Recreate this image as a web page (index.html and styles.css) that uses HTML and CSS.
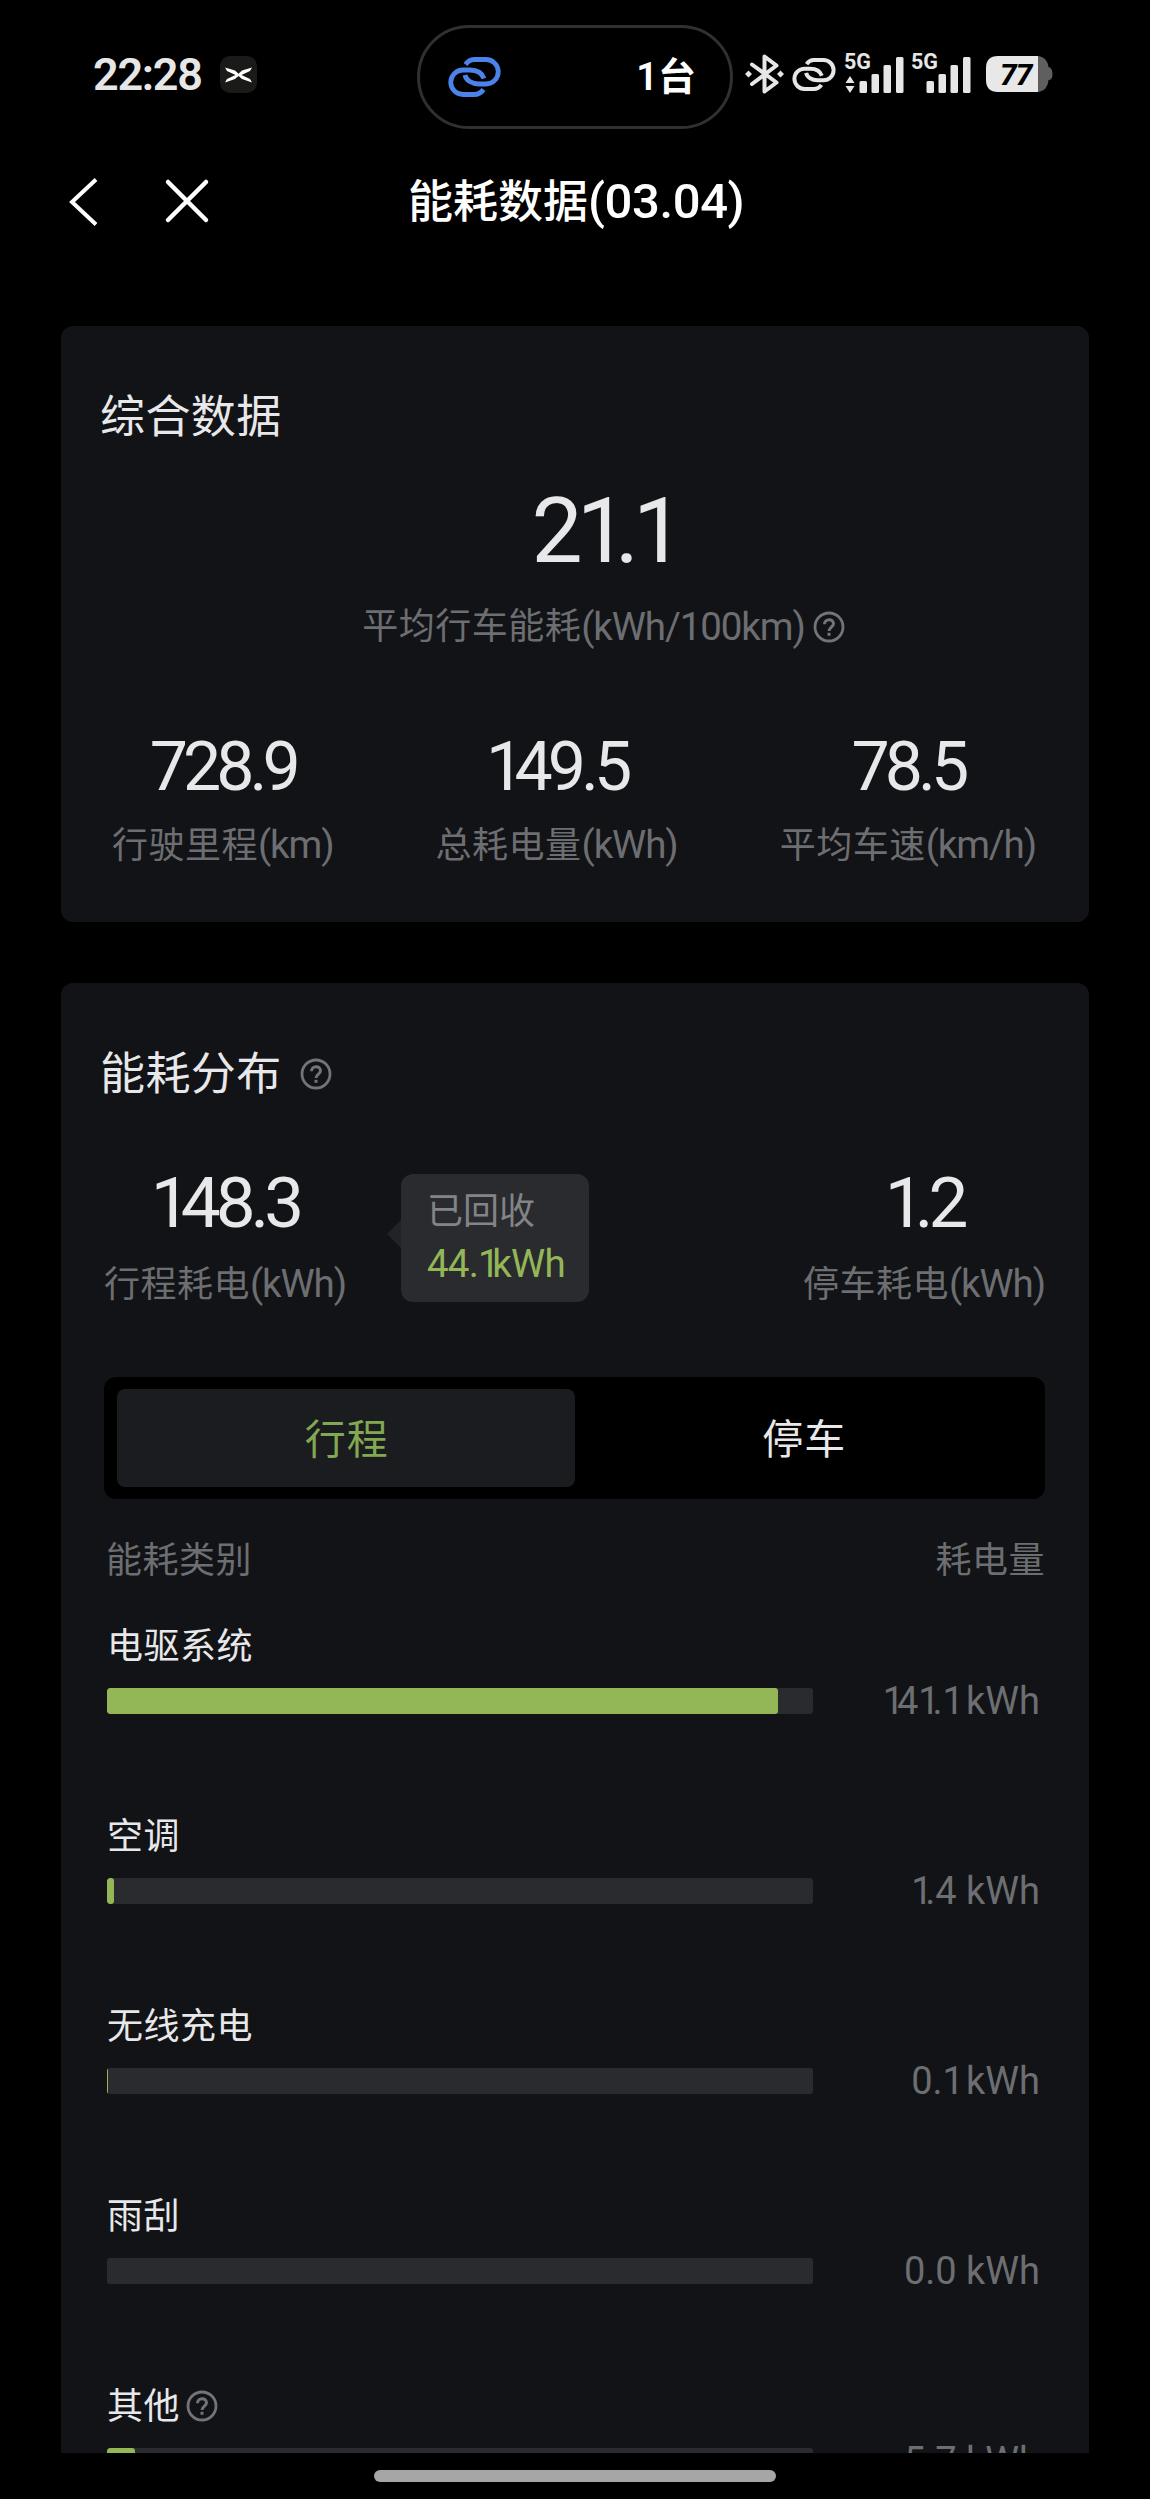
FILE: index.html
```html
<!DOCTYPE html>
<html lang="zh-CN">
<head>
<meta charset="utf-8">
<title>能耗数据</title>
<link rel="stylesheet" href="styles.css">
</head>
<body>
<svg width="0" height="0" class="defs">
  <symbol id="link" viewBox="0 0 53 40">
    <g fill="none" stroke="currentColor" stroke-width="4.800">
      <path d="M17.500 7.500C20 4 22.500 2.500 26 2.500H38A12.200 12.200 0 0 1 38 27H31C24 27 18 23.500 17 18"/>
      <path d="M36 21.500C34 16 29 13 22 13H15A12.200 12.200 0 0 0 15 37.500H26C30 37.500 33 36 35.500 32.500"/>
    </g>
  </symbol>
  <symbol id="help" viewBox="0 0 32 32">
    <g fill="none" stroke="currentColor" stroke-width="2.800">
      <circle cx="16" cy="16" r="14"/>
      <path d="M11.500 13.200C11.500 7.200 20.500 7.200 20.500 12.800C20.500 16 16 16.200 16 20" stroke-width="3"/>
      <path d="M16 21.800V24.800" stroke-width="3"/>
    </g>
  </symbol>
</svg>
<div class="screen">
  <header class="status">
    <span class="clock">22:28</span>
    <span class="app-badge">
      <svg width="27" height="16" viewBox="0 0 27 16"><path d="M0 .5L10 3.500L13.500 6.800L17 3.500L27 .5L25 4L16.500 8L25 12L27 15.500L17 12L13.500 9L10 12L0 15.500L2 12L10.500 8L2 4Z" fill="#fff"/></svg>
    </span>
    <div class="island">
      <svg class="island-link" width="53" height="40"><use href="#link"/></svg>
      <span class="island-text">1台</span>
    </div>
    <div class="indicators">
      <svg width="39" height="42" viewBox="0 0 39 42"><g fill="none" stroke="#e6e6e6" stroke-width="4" stroke-linejoin="round" stroke-linecap="round"><path d="M7 11.500L31.500 29.500L19.500 38.500V3.500L31.500 12.500L7 31"/></g><path d="M3.500 17.500L7 21L3.500 24.500L0 21ZM35.500 17.500L39 21L35.500 24.500L32 21Z" fill="#e6e6e6"/></svg>
      <svg class="status-link" width="44" height="33"><use href="#link"/></svg>
      <svg class="signal" width="61" height="44" viewBox="0 0 61 44"><text x="0" y="17" class="net">5G</text><g fill="#e6e6e6"><path d="M6 24L10.500 31H1.500ZM6 41L10.500 34H1.500Z"/><rect x="15.500" y="29" width="7.500" height="12" rx="1.500"/><rect x="27.500" y="22" width="7.500" height="19" rx="1.500"/><rect x="39.500" y="13" width="7.500" height="28" rx="1.500"/><rect x="52" y="5" width="7.500" height="36" rx="1.500"/></g></svg>
      <svg class="signal second" width="61" height="44" viewBox="0 0 61 44"><text x="0" y="17" class="net">5G</text><g fill="#e6e6e6"><rect x="15.500" y="29" width="7.500" height="12" rx="1.500"/><rect x="27.500" y="22" width="7.500" height="19" rx="1.500"/><rect x="39.500" y="13" width="7.500" height="28" rx="1.500"/><rect x="52" y="5" width="7.500" height="36" rx="1.500"/></g></svg>
      <svg width="67" height="36" viewBox="0 0 67 36"><path d="M51 0C58 0 62 5 62.500 11Q66.500 12 66.500 18T62.500 24C62 31 58 36 51 36Z" fill="#5f5f5f"/><path d="M12 0H52V36H12Q0 36 0 24V12Q0 0 12 0Z" fill="#e8e8e8"/><text x="14" y="28.500" class="level">77</text></svg>
    </div>
  </header>

  <nav class="nav">
    <svg width="29" height="48" viewBox="0 0 29 48"><path d="M27 1.500L3 24L27 46.500" fill="none" stroke="#fff" stroke-width="4"/></svg>
    <svg class="close" width="44" height="44" viewBox="0 0 44 44"><path d="M3 3L41 41M41 3L3 41" fill="none" stroke="#fff" stroke-width="4.500" stroke-linecap="round"/></svg>
    <h1>能耗数据<span class="en">(03.04)</span></h1>
  </nav>

  <main>
    <section class="card summary">
      <h2>综合数据</h2>
      <div class="hero">
        <div class="hero-value">2<span class="one">1</span>.<span class="one">1</span></div>
        <div class="label">平均行车能耗<span class="en">(kWh/100km)</span><svg class="help" width="32" height="32"><use href="#help"/></svg></div>
      </div>
      <div class="stats">
        <div class="stat"><div class="num">728.9</div><div class="label">行驶里程<span class="en">(km)</span></div></div>
        <div class="stat"><div class="num"><span class="one">1</span>49.5</div><div class="label">总耗电量<span class="en">(kWh)</span></div></div>
        <div class="stat"><div class="num">78.5</div><div class="label">平均车速<span class="en">(km/h)</span></div></div>
      </div>
    </section>

    <section class="card dist">
      <h2>能耗分布<svg class="help" width="32" height="32"><use href="#help"/></svg></h2>
      <div class="split">
        <div class="stat"><div class="num"><span class="one">1</span>48.3</div><div class="label">行程耗电<span class="en">(kWh)</span></div></div>
        <div class="recovered">
          <div class="rec-label">已回收</div>
          <div class="rec-value">44.<span class="one">1</span>kWh</div>
        </div>
        <div class="stat parked"><div class="num"><span class="one">1</span>.2</div><div class="label">停车耗电<span class="en">(kWh)</span></div></div>
      </div>
      <div class="tabs"><div class="tab active">行程</div><div class="tab">停车</div></div>
      <div class="head label"><span>能耗类别</span><span>耗电量</span></div>
      <div class="rows">
        <div class="row"><div class="name">电驱系统</div><div class="meter"><div class="track"><div class="fill" style="width:95.100%"></div></div><div class="amount"><span class="one">1</span>4<span class="one">1</span>.<span class="one">1</span> kWh</div></div></div>
        <div class="row"><div class="name">空调</div><div class="meter"><div class="track"><div class="fill" style="width:1%"></div></div><div class="amount"><span class="one">1</span>.4 kWh</div></div></div>
        <div class="row"><div class="name">无线充电</div><div class="meter"><div class="track"><div class="fill" style="width:.15%"></div></div><div class="amount">0.<span class="one">1</span> kWh</div></div></div>
        <div class="row"><div class="name">雨刮</div><div class="meter"><div class="track"><div class="fill" style="width:0"></div></div><div class="amount">0.0 kWh</div></div></div>
        <div class="row"><div class="name">其他<svg class="help" width="32" height="32"><use href="#help"/></svg></div><div class="meter"><div class="track"><div class="fill" style="width:3.900%"></div></div><div class="amount">5.7 kWh</div></div></div>
      </div>
    </section>
  </main>
  <footer><div class="home"></div></footer>
</div>
</body>
</html>
```
FILE: styles.css
```css
* { box-sizing: border-box; }
body {
  margin: 0;
  background: #000;
  color: #e8e8ea;
  font-family: Roboto, "Noto Sans CJK SC", sans-serif;
}
svg { display: block; flex: none; overflow: visible; }
.defs { position: absolute; }
h1, h2 { margin: 0; font-weight: 400; }
.screen {
  width: 1150px;
  height: 2499px;
  display: flex;
  flex-direction: column;
  overflow: hidden;
}

/* status bar */
.status {
  height: 150px;
  flex: none;
  display: flex;
  align-items: flex-start;
  padding-left: 93px;
}
.clock {
  width: 127px;
  margin-top: 48px;
  font-size: 45px;
  line-height: 54px;
  font-weight: 600;
  letter-spacing: -1.300px;
  color: #e6e6e6;
}
.app-badge {
  width: 37px;
  height: 37px;
  margin-top: 56px;
  border-radius: 10px;
  background: #1a1a19;
  display: flex;
  align-items: center;
  justify-content: center;
}
.island {
  width: 316px;
  height: 104px;
  margin: 25px 0 0 160px;
  padding: 0 34px 0 28px;
  border: 3px solid #303030;
  border-radius: 52px;
  display: flex;
  align-items: center;
  justify-content: space-between;
}
.island-link { color: #4b83ea; }
.island-text {
  font-size: 38px;
  line-height: 50px;
  font-weight: 600;
  color: #fff;
}
.indicators {
  display: flex;
  align-items: center;
  margin: 52px 0 0 12px;
  height: 44px;
}
.status-link { margin-left: 8px; color: #e6e6e6; }
.signal { margin-left: 8px; }
.signal.second { margin-left: 6px; }
.indicators svg:last-child { margin-left: 14px; }
.net { font: 700 21.500px Roboto, sans-serif; fill: #e6e6e6; }
.level { font: italic 800 30px Roboto, sans-serif; fill: #000; letter-spacing: -1px; }

/* title bar */
.nav {
  height: 176px;
  flex: none;
  display: grid;
  grid-template-columns: 29px 44px 1fr;
  column-gap: 67px;
  padding: 28px 0 0 69px;
  align-items: start;
}
.nav .close { margin-top: 1px; }
h1 {
  margin-left: 132px;
  font-size: 45px;
  line-height: 48px;
  color: #fff;
  font-weight: 500;
  white-space: nowrap;
}
h1 .en { font-size: 49px; letter-spacing: -.4px; }

/* cards */
main {
  flex: none;
  height: 2127px;
  padding: 0 61px;
  overflow: hidden;
}
.card {
  background: #121316;
  border-radius: 12px;
}
h2 {
  font-size: 45px;
  letter-spacing: .4px;
  line-height: 60px;
  display: flex;
  align-items: center;
}
h2 .help { margin: -3px 0 0 18px; }
.help { color: #737477; }
.label {
  font-size: 36px;
  line-height: 44px;
  letter-spacing: .5px;
  color: #6d6e71;
  white-space: nowrap;
}
.label .en { font-size: 38.500px; letter-spacing: -1.100px; }
.num {
  font-size: 68px;
  line-height: 70px;
  letter-spacing: -5px;
}
/* the numeral 1 has wide side bearings, so it is set tighter */
.one { letter-spacing: -.14em; }
.amount .one, .rec-value .one { letter-spacing: -.19em; }
.stat { display: flex; flex-direction: column; align-items: center; }

.summary { height: 596px; padding: 62px 53px 0 39px; }
.hero { display: flex; flex-direction: column; align-items: center; margin-left: 71px; }
.hero-value {
  font-size: 91px;
  line-height: 96px;
  letter-spacing: -6px;
  margin: 35px 4px 0 0;
}
.hero .label { display: flex; align-items: center; margin-top: 26px; }
.hero .help { margin-left: 8px; }
.stats {
  display: flex;
  justify-content: space-between;
  margin: 83px 0 0 12px;
}
.stats .label { margin-top: 21px; }

.dist { height: 1600px; margin-top: 61px; padding: 62px 44px 0 43px; }
.dist h2 { margin-left: -4px; }
.split { display: flex; margin-top: 58px; align-items: flex-start; }
.split .num { font-size: 71px; margin-top: 5px; }
.split .label { margin-top: 24px; }
.recovered {
  position: relative;
  width: 188px;
  height: 128px;
  margin: 11px 0 0 55px;
  padding: 15px 0 0 26px;
  border-radius: 12px;
  background: #2a2b2e;
}
.recovered::before {
  content: "";
  position: absolute;
  left: -14px;
  top: 46px;
  border: solid transparent;
  border-width: 14px 14px 14px 0;
  border-right-color: #222326;
}
.rec-label { font-size: 36px; line-height: 46px; color: #838487; }
.rec-value { font-size: 38.500px; line-height: 58px; color: #93b757; letter-spacing: -.8px; white-space: nowrap; }
.parked { margin-left: auto; }

.tabs {
  height: 122px;
  margin-top: 70px;
  padding: 12px 13px;
  display: flex;
  border-radius: 12px;
  background: #000;
}
.tab {
  flex: 1;
  display: flex;
  align-items: center;
  justify-content: center;
  padding: 0 0 5px 2px;
  font-size: 41px;
  letter-spacing: 1px;
  border-radius: 8px;
}
.tab.active { background: #1b1c1f; color: #82a852; }
.head { display: flex; justify-content: space-between; margin: 40px 0 0 2px; }
.rows { padding-left: 3px; margin-top: -2px; }
.row { height: 190px; padding-top: 43px; }
.name {
  display: flex;
  align-items: center;
  font-size: 36px;
  letter-spacing: .5px;
  line-height: 46px;
}
.name .help { margin: -3px 0 0 6px; }
.meter { display: flex; align-items: center; justify-content: space-between; height: 26px; margin-top: 18px; padding-right: 5px; }
.track { width: 706px; height: 26px; border-radius: 3px; background: #2a2b2e; overflow: hidden; }
.fill { height: 100%; border-radius: 3px; background: #93b757; }
.amount { font-size: 38px; line-height: 26px; color: #6d6e71; white-space: nowrap; }

footer { height: 46px; display: flex; justify-content: center; padding-top: 17px; }
.home { width: 402px; height: 12px; border-radius: 6px; background: #a6a6a6; }
```
